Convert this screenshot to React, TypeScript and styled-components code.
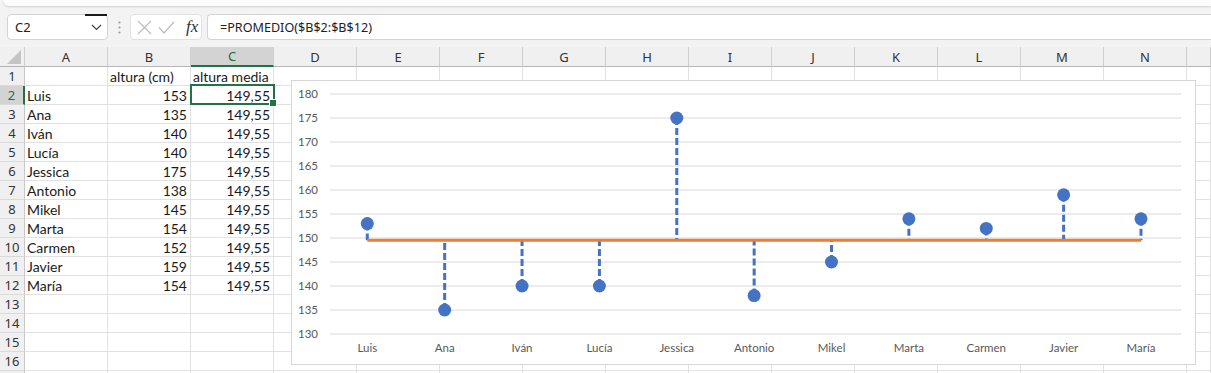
import styled, { createGlobalStyle, css } from 'styled-components';

// ─── Data ─────────────────────────────────────────────────────────────────────

const people: [string, number][] = [
  ['Luis', 153],
  ['Ana', 135],
  ['Iván', 140],
  ['Lucía', 140],
  ['Jessica', 175],
  ['Antonio', 138],
  ['Mikel', 145],
  ['Marta', 154],
  ['Carmen', 152],
  ['Javier', 159],
  ['María', 154],
];

const AVG = 149.55;
const COLUMNS = 'ABCDEFGHIJKLMN'.split('');
const ROW_COUNT = 17;

// ─── Global ───────────────────────────────────────────────────────────────────

const GlobalStyle = createGlobalStyle`
  html, body {
    margin: 0;
    padding: 0;
    height: 373px;
    overflow: hidden;
    background: #f3f3f3;
  }
  * { box-sizing: border-box; }
`;

// ─── Formula bar ──────────────────────────────────────────────────────────────

const Page = styled.div`
  width: 1211px;
  height: 373px;
  overflow: hidden;
  font-family: 'Noto Sans', 'Open Sans', sans-serif;
`;

const RibbonEdge = styled.div`
  height: 6px;
  margin: 0 0 0 3px;
  background: #fcfcfc;
  border-radius: 0 0 0 7px;
  box-shadow: 0 1px 2px rgba(0, 0, 0, 0.14);
`;

const FormulaBar = styled.div`
  display: flex;
  align-items: stretch;
  height: 26px;
  margin: 8px 0 7px;
  padding-left: 7px;
`;

const NameBox = styled.div`
  position: relative;
  width: 101px;
  display: flex;
  align-items: center;
  justify-content: space-between;
  background: #fff;
  border: 1px solid #d4d4d4;
  border-radius: 4px;
  padding-left: 7px;
  font-size: 13px;
  color: #222;
`;

const DropButton = styled.div`
  align-self: stretch;
  width: 22px;
  display: flex;
  align-items: center;
  justify-content: center;
  margin-top: -1px;
  border-top: 2px solid #1b1b1b;
`;

const Grip = styled.div`
  width: 22px;
  display: flex;
  align-items: center;
  justify-content: center;
`;

const FuncBox = styled.div`
  width: 72px;
  display: flex;
  align-items: center;
  background: #fff;
  border: 1px solid #e1e1e1;
  border-radius: 4px;
  padding-left: 6px;
  gap: 6px;
`;

const FxLabel = styled.span`
  margin-left: 5px;
  font-family: 'Liberation Serif', 'DejaVu Serif', serif;
  font-style: italic;
  font-size: 17px;
  color: #333;
`;

const FormulaInput = styled.div`
  flex: 1;
  margin-left: 5px;
  display: flex;
  align-items: center;
  background: #fff;
  border: 1px solid #d4d4d4;
  border-right: none;
  border-radius: 4px 0 0 4px;
  padding-left: 12px;
  font-size: 12.6px;
  color: #222;
`;

// ─── Sheet grid ───────────────────────────────────────────────────────────────

const Sheet = styled.div`
  position: relative;
  display: grid;
  grid-template-columns: 25px repeat(14, 83px) 1fr;
  grid-template-rows: 20px;
  grid-auto-rows: 19px;
  background: #fff;
`;

const headerSelected = css`
  background: #d3d3d3;
  color: #1e6e42;
`;

const ColHeader = styled.div<{ $selected?: boolean }>`
  display: flex;
  align-items: center;
  justify-content: center;
  background: #f0f0f0;
  border-right: 1px solid #cfcfcf;
  border-bottom: ${({ $selected }) =>
    $selected ? '2px solid #217346' : '1px solid #b5b5b5'};
  font-size: 13px;
  color: #333;
  ${({ $selected }) => $selected && headerSelected}
`;

const Corner = styled.div`
  position: relative;
  background: #f0f0f0;
  border-right: 1px solid #cfcfcf;
  border-bottom: 1px solid #b5b5b5;
`;

const CornerTriangle = styled.div`
  position: absolute;
  right: 3px;
  bottom: 2px;
  width: 0;
  height: 0;
  border-left: 14px solid transparent;
  border-bottom: 14px solid #c4c4c4;
`;

const RowHeader = styled.div<{ $selected?: boolean }>`
  display: flex;
  align-items: center;
  justify-content: center;
  background: #f0f0f0;
  border-bottom: 1px solid #dadada;
  border-right: ${({ $selected }) =>
    $selected ? '2px solid #217346' : '1px solid #c8c8c8'};
  font-size: 13px;
  color: #333;
  ${({ $selected }) => $selected && headerSelected}
`;

const Cell = styled.div<{ $align?: 'left' | 'right'; $active?: boolean }>`
  position: relative;
  display: flex;
  align-items: flex-end;
  justify-content: ${({ $align }) => ($align === 'right' ? 'flex-end' : 'flex-start')};
  padding: 0 3px 0 2px;
  border-right: 1px solid #e1e1e1;
  border-bottom: 1px solid #e1e1e1;
  font-family: Lato, 'Liberation Sans', sans-serif;
  font-size: 14px;
  line-height: 17px;
  color: #1a1a1a;
  white-space: nowrap;

  ${({ $active }) =>
    $active &&
    css`
      &::after {
        content: '';
        position: absolute;
        left: -1px;
        top: -2px;
        right: -2px;
        bottom: -1px;
        border: 2px solid #217346;
        pointer-events: none;
      }
      &::before {
        content: '';
        position: absolute;
        right: -4px;
        bottom: -3px;
        width: 6px;
        height: 6px;
        background: #217346;
        border: 1px solid #fff;
        z-index: 2;
      }
    `}
`;

// ─── Chart ────────────────────────────────────────────────────────────────────

const ChartBox = styled.div`
  position: absolute;
  left: 291px;
  top: 33px;
  width: 905px;
  height: 285px;
  background: #fff;
  border: 1px solid #d6d6d6;
  z-index: 3;
`;

const ChartSvg = styled.svg`
  display: block;
  font-family: Lato, 'Liberation Sans', sans-serif;
  font-size: 11.5px;
`;

const yOf = (v: number) => 94 + (180 - v) * 4.8;
const xOf = (i: number) => 367.3 + 77.37 * i;

function Chart() {
  const ticks = [180, 175, 170, 165, 160, 155, 150, 145, 140, 135, 130];
  const avgY = yOf(AVG);
  return (
    <ChartBox>
      <ChartSvg width={903} height={283} viewBox="292 81 903 283">
        {ticks.map((t) => (
          <g key={t}>
            <line x1={330} x2={1181} y1={yOf(t)} y2={yOf(t)} stroke="#d9d9d9" strokeWidth={1} />
            <text x={318} y={yOf(t) + 4} textAnchor="end" fill="#595959">
              {t}
            </text>
          </g>
        ))}
        {people.map(([, v], i) => (
          <line
            key={`d${i}`}
            x1={xOf(i)}
            x2={xOf(i)}
            y1={yOf(v)}
            y2={avgY}
            stroke="#4472c4"
            strokeWidth={3}
            strokeDasharray="7 3"
          />
        ))}
        <line x1={xOf(0)} x2={xOf(10)} y1={avgY} y2={avgY} stroke="#ed7d31" strokeWidth={3} />
        {people.map(([name, v], i) => (
          <g key={name}>
            <circle cx={xOf(i)} cy={yOf(v)} r={6.5} fill="#4472c4" />
            <text x={xOf(i)} y={352} textAnchor="middle" fill="#595959">
              {name}
            </text>
          </g>
        ))}
      </ChartSvg>
    </ChartBox>
  );
}

// ─── Icons ────────────────────────────────────────────────────────────────────

const Chevron = () => (
  <svg width="11" height="7" viewBox="0 0 11 7">
    <polyline points="1,1 5.5,5.5 10,1" fill="none" stroke="#444" strokeWidth="1.2" />
  </svg>
);

const Dots = () => (
  <svg width="3" height="13" viewBox="0 0 3 13">
    <circle cx="1.5" cy="1.5" r="1.1" fill="#9a9a9a" />
    <circle cx="1.5" cy="6.5" r="1.1" fill="#9a9a9a" />
    <circle cx="1.5" cy="11.5" r="1.1" fill="#9a9a9a" />
  </svg>
);

const Cross = () => (
  <svg width="15" height="15" viewBox="0 0 15 15">
    <path d="M1 1 L14 14 M14 1 L1 14" stroke="#bdbdbd" strokeWidth="1.2" fill="none" />
  </svg>
);

const Check = () => (
  <svg width="17" height="13" viewBox="0 0 17 13">
    <path d="M1 6.5 L6 12 L16 1" stroke="#bdbdbd" strokeWidth="1.2" fill="none" />
  </svg>
);

// ─── App ──────────────────────────────────────────────────────────────────────

function cellsFor(row: number): { text: string; align?: 'left' | 'right' }[] {
  if (row === 1) return [{ text: '' }, { text: 'altura (cm)' }, { text: 'altura media' }];
  const p = people[row - 2];
  if (!p) return [];
  return [
    { text: p[0] },
    { text: String(p[1]), align: 'right' },
    { text: '149,55', align: 'right' },
  ];
}

export default function App() {
  const rows = Array.from({ length: ROW_COUNT }, (_, i) => i + 1);
  return (
    <Page>
      <GlobalStyle />
      <RibbonEdge />
      <FormulaBar>
        <NameBox>
          C2
          <DropButton>
            <Chevron />
          </DropButton>
        </NameBox>
        <Grip>
          <Dots />
        </Grip>
        <FuncBox>
          <Cross />
          <Check />
          <FxLabel>fx</FxLabel>
        </FuncBox>
        <FormulaInput>=PROMEDIO($B$2:$B$12)</FormulaInput>
      </FormulaBar>

      <Sheet>
        <Corner>
          <CornerTriangle />
        </Corner>
        {COLUMNS.map((c) => (
          <ColHeader key={c} $selected={c === 'C'}>
            {c}
          </ColHeader>
        ))}
        <ColHeader />

        {rows.map((r) => {
          const values = cellsFor(r);
          return [
            // the last row is only a sliver at the bottom edge, its number is out of view
            <RowHeader key={`h${r}`} $selected={r === 2}>
              {r < ROW_COUNT ? r : ''}
            </RowHeader>,
            ...Array.from({ length: 15 }, (_, c) => {
              const v = values[c];
              return (
                <Cell key={`${r}-${c}`} $align={v?.align} $active={r === 2 && c === 2}>
                  {v?.text}
                </Cell>
              );
            }),
          ];
        })}

        <Chart />
      </Sheet>
    </Page>
  );
}
